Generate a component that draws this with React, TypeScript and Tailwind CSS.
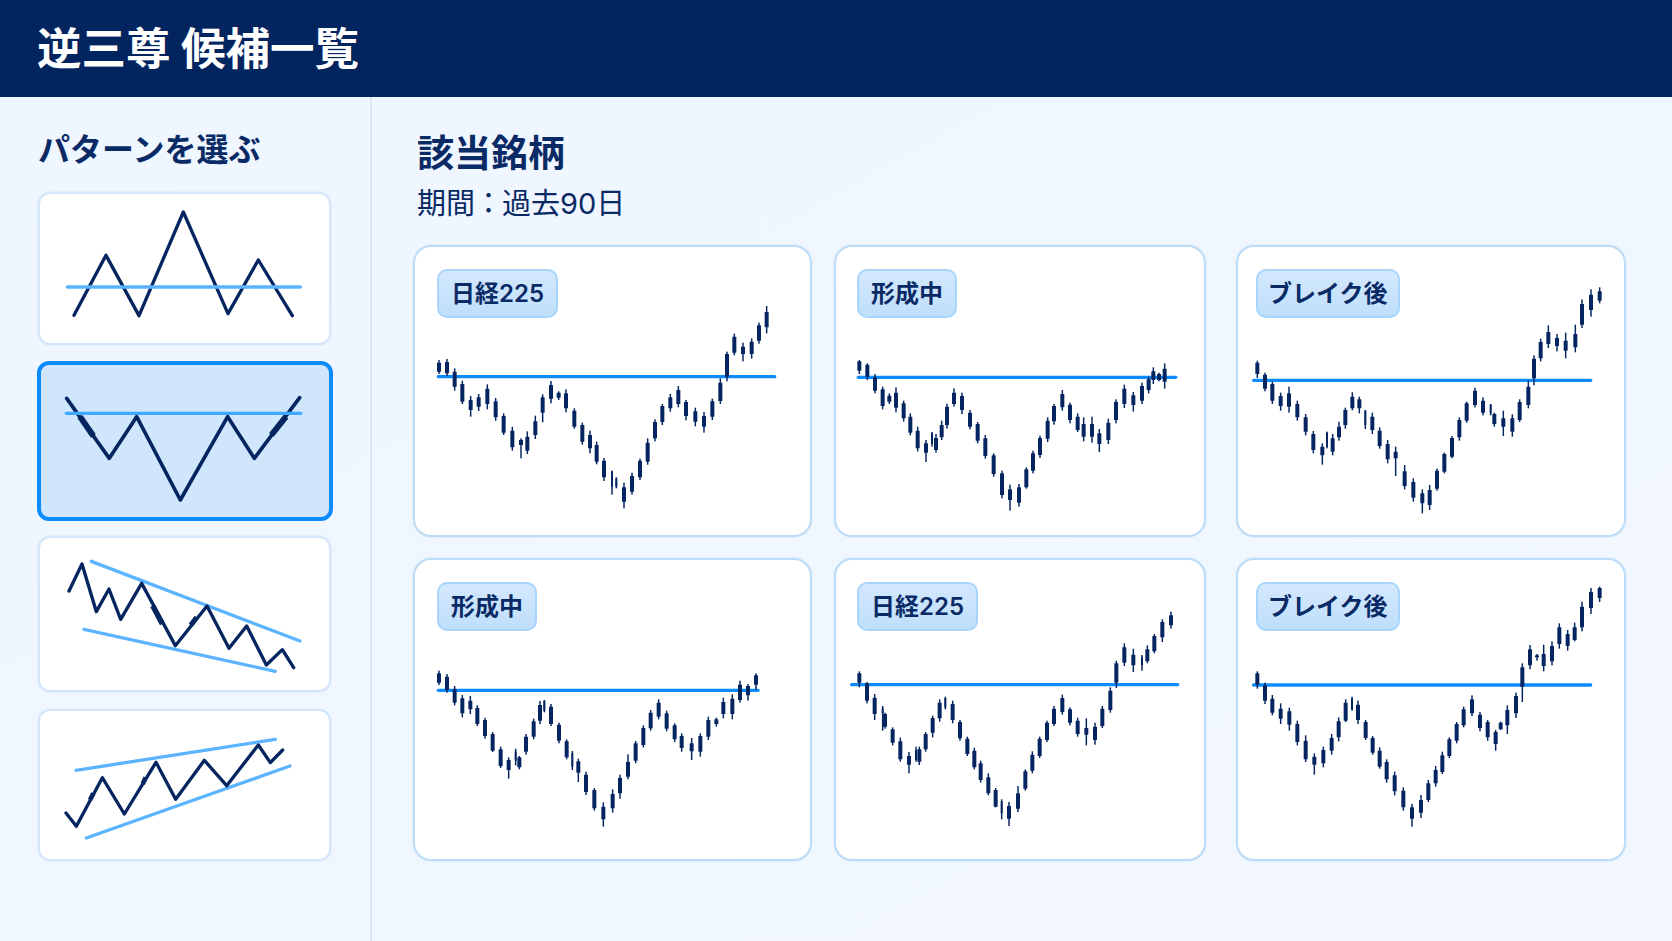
type Candle = number[];

const NAVY = "#052560";
const LINE = "#0a8cff";
const SOFT = "#5cb4ff";

const c1: Candle[] = [[117,390,398,425,432],[141,387,396,430,438],[164,415,425,470,482],[187,452,462,515,522],[212,498,510,540,560],[236,492,502,530,543],[262,463,476,522,538],[287,504,514,562,572],[311,550,558,608,615],[337,590,602,652,662],[363,625,630,645,685],[382,604,620,662,672],[406,557,574,615,627],[428,493,502,548,577],[453,453,465,506,520],[476,484,488,503,510],[498,478,490,535,547],[523,535,542,590,596],[547,578,585,635,644],[570,602,615,655,670],[590,635,645,695,703],[612,684,692,742,753],[636,722,724,770,794,1],[649,742,745,770,775,1],[672,758,772,815,835],[696,728,738,785,794],[720,686,692,742,750],[743,625,638,695,704],[765,568,576,625,634],[787,522,528,576,585],[811,492,502,535,545],[835,468,480,522,532],[858,510,516,558,571],[886,533,544,575,589],[912,546,558,590,608],[937,506,514,560,570],[961,445,458,513,522],[981,365,372,440,454],[1003,311,320,368,376],[1029,338,350,372,394],[1055,325,335,372,386],[1077,278,286,332,341],[1100,228,246,292,310]];
const c2: Candle[] = [[88,390,394,422,432],[112,400,404,440,450],[135,432,442,482,490],[158,470,478,528,538],[178,490,497,515,522],[198,472,488,533,547],[221,512,520,565,575],[241,550,560,608,616],[263,590,602,655,664],[288,630,640,668,696],[306,606,610,642,650,1],[318,612,624,660,668],[335,572,585,622,630],[351,521,530,585,596],[372,475,488,522,530],[396,488,498,540,552],[420,540,548,590,598],[443,576,582,632,640],[466,615,625,678,686],[491,670,676,732,740],[516,722,730,795,805],[540,764,778,810,842],[567,762,772,818,830],[589,712,718,772,776],[609,662,670,722,730],[630,617,624,675,684],[653,562,572,626,636],[672,522,528,574,584],[697,480,492,532,542],[720,518,524,570,580],[743,550,560,600,606],[761,562,582,620,634],[786,560,582,620,638],[808,597,610,642,666],[835,566,578,630,642],[858,508,516,570,580],[883,464,476,522,534],[910,486,496,525,545],[936,458,468,512,522],[956,440,448,480,490],[970,412,424,450,462],[987,428,432,450,454],[1004,400,416,455,476]];
const c3: Candle[] = [[82,392,398,432,444],[105,428,434,476,484],[127,455,462,512,522],[152,488,498,528,542],[177,470,490,530,548],[202,512,522,562,572],[227,552,562,605,616],[250,603,612,660,670],[277,640,650,676,704],[291,605,608,650,655,1],[308,612,625,665,676],[327,575,590,622,632],[346,533,540,585,596],[367,487,500,535,541],[388,500,508,535,550],[406,540,542,585,597,1],[427,548,560,600,612],[449,592,602,648,656],[473,630,642,688,700],[497,650,665,685,738],[524,705,724,768,778],[550,745,756,803,815],[577,778,790,820,850],[599,765,780,825,840],[621,716,722,776,782],[643,668,672,725,730],[666,618,624,680,685],[688,562,570,622,632],[710,515,520,572,578],[735,473,482,525,532],[759,502,512,548,556],[782,522,524,550,556,1],[793,548,552,582,590],[820,542,565,590,618],[847,553,565,605,620],[869,508,516,570,576],[895,452,470,525,535],[912,376,386,445,466],[932,326,336,385,394],[955,286,306,342,354],[981,312,324,348,364],[1007,308,332,362,385],[1036,284,312,352,367],[1056,208,222,284,294],[1083,178,194,240,260],[1109,172,184,212,220]];
const c4: Candle[] = [[117,362,370,398,405],[141,372,380,420,428],[164,408,418,458,466],[187,435,445,490,502],[211,438,452,478,492],[232,466,474,522,528],[255,503,510,558,566],[278,546,552,602,606],[302,590,598,648,654],[326,622,630,660,686],[347,596,604,632,646,1],[358,618,622,652,658],[378,552,560,605,614],[401,506,514,560,568],[420,453,465,512,522],[433,450,453,482,487,1],[453,462,470,522,528],[477,518,524,572,580],[500,568,574,622,628],[517,603,610,650,660,1],[535,626,634,668,696],[558,665,674,726,735],[583,714,720,775,782],[610,757,770,808,830],[638,718,732,775,788],[660,674,684,730,746],[684,613,636,680,688],[707,573,580,632,640],[730,526,534,585,592],[752,480,488,535,542],[776,448,458,500,508],[800,482,490,536,544],[824,520,526,568,576],[845,550,558,594,605],[875,564,580,604,630],[901,550,558,605,620],[925,500,510,560,570],[949,503,508,522,530],[970,443,456,492,505],[997,433,446,492,508],[1020,392,404,450,458],[1044,402,408,436,452],[1068,370,376,404,420]];
const c5: Candle[] = [[88,364,370,398,412],[111,396,400,452,460],[134,432,443,492,510],[158,468,475,490,542,1],[165,488,492,530,536],[188,532,538,578,586],[211,563,574,628,635],[237,606,618,644,670],[258,590,600,630,635,1],[268,590,598,635,645],[287,546,552,598,605],[308,497,504,548,562],[329,448,458,505,515],[346,440,444,472,478,1],[368,452,462,510,520],[390,510,516,565,572],[412,560,566,612,618],[433,593,602,652,658],[452,632,640,690,698],[475,670,682,730,736],[497,714,720,770,772],[515,748,754,790,808,1],[537,756,768,806,828],[564,708,730,776,786],[586,658,664,716,722],[607,604,614,662,670],[629,560,566,618,624],[651,512,518,570,576],[672,468,476,522,528],[697,434,444,486,494],[720,472,478,518,526],[743,503,512,552,560],[769,505,534,554,586],[795,518,530,570,584],[817,468,476,528,534],[841,412,422,480,488],[859,332,340,398,414],[883,280,292,338,348],[910,296,314,346,366],[936,315,322,345,362,1],[952,286,298,334,340],[973,252,258,304,310],[997,208,216,262,276],[1023,185,196,226,236]];
const c6: Candle[] = [[82,364,370,404,416],[105,398,406,452,462],[127,435,446,488,496],[152,460,476,506,522],[178,473,484,524,542],[202,512,522,576,586],[227,556,572,628,636],[253,610,620,644,674],[280,590,600,640,652],[305,552,564,602,614],[326,502,514,562,574],[347,448,458,512,516],[366,440,445,478,482,1],[384,452,464,510,522],[407,510,516,564,570],[428,558,564,608,614],[449,592,602,650,656],[470,628,636,688,698],[494,665,676,724,736],[520,712,722,772,782],[546,762,772,806,830],[573,735,750,788,804],[595,690,700,750,756],[617,648,660,700,710],[637,605,616,666,672],[658,562,568,618,624],[680,516,522,572,580],[701,470,478,526,532],[726,436,448,490,498],[750,486,494,534,544],[773,510,516,562,572],[797,540,546,582,602],[812,515,518,538,540],[832,466,480,526,552],[858,428,438,490,504],[877,340,352,410,456],[900,285,298,346,358],[921,312,316,322,332],[941,284,312,348,364],[966,274,288,334,346],[988,220,232,282,296],[1013,240,252,288,302],[1034,218,232,270,274],[1056,155,170,232,244],[1083,114,126,174,192],[1109,110,114,144,156]];

// chart coordinates are measured at 3x, vb = inner box of the svg in those units
function Chart({ vb, w, h, line, candles }: { vb: number[]; w: number; h: number; line: number[]; candles: Candle[] }) {
  return (
    <svg width={w} height={h} viewBox={vb.join(" ")} className="block overflow-visible">
      <line x1={line[0] + 3} x2={line[1] - 3} y1={line[2]} y2={line[2]} stroke={LINE} strokeWidth="10" strokeLinecap="round" />
      {candles.map((c) => (
        <g key={c[0]} fill={NAVY}>
          <rect x={c[0] - 2.2} y={c[1]} width="4.4" height={c[4] - c[1]} />
          <rect
            x={c[0] - (c[5] ? 3 : 6)}
            y={c[2]}
            width={c[5] ? 6 : 12}
            height={c[3] - c[2]}
            rx="1"
          />
        </g>
      ))}
    </svg>
  );
}

function Thumb({ vb, w, h, children }: { vb: number[]; w: number; h: number; children: React.ReactNode }) {
  return (
    <svg
      width={w}
      height={h}
      viewBox={vb.join(" ")}
      className="block"
      fill="none"
      strokeLinecap="round"
      strokeLinejoin="round"
    >
      {children}
    </svg>
  );
}

function Badge({ label, cls }: { label: string; cls: string }) {
  return (
    <div
      className={`flex h-[49px] items-center self-start rounded-[10px] border-2 border-[#a9d5fc] bg-gradient-to-b from-[#d3e8fd] to-[#bfdffb] pt-px text-[24px] font-semibold text-[#0a2a66] ${cls}`}
    >
      {label}
    </div>
  );
}

const pts1 = "222,946 318,766 417,947 550,636 684,941 775,780 877,947";
const pts2 = "200,175 328,355 410,230 541,480 683,230 763,355 899,173";
const pts3 = "207,753 246,672 289,815 327,747 362,838 425,730 526,917 621,798 687,925 740,858 799,975 847,929 881,983";
const pts4 = "198,369 229,409 307,263 373,372 468,217 527,328 613,211 680,287 775,165 811,218 848,180";

export default function App() {
  return (
    <div className="flex h-[941px] w-[1672px] flex-col overflow-hidden bg-gradient-to-br from-[#eef6ff] to-[#f2f7ff] font-['Inter','Noto_Sans_CJK_JP',sans-serif] text-[#0a2a66]">
      <header className="flex h-[97px] shrink-0 items-center bg-[#02245f] pt-px pl-[37px]">
        <h1 className="text-[44.5px] leading-none font-bold text-white">逆三尊 候補一覧</h1>
      </header>

      <div className="flex flex-1">
        <aside className="w-[372px] shrink-0 border-r-2 border-[#d6e7fa] pt-[37px] pl-[38px]">
          <h2 className="h-[32px] text-[32px] leading-[32px] font-bold whitespace-nowrap">パターンを選ぶ</h2>

          <div className="mt-[26px] h-[153px] w-[293px] overflow-hidden rounded-[12px] border-2 border-[#d5e6fa] bg-white shadow-[0_0_0_1px_#e4f0fc]">
            <Thumb vb={[120, 582, 867, 447]} w={289} h={149}>
              <polyline points={pts1} stroke={NAVY} strokeWidth="10" />
              <line x1="202" x2="901" y1="861" y2="861" stroke={SOFT} strokeWidth="10" />
            </Thumb>
          </div>

          <div className="mt-[16px] -ml-px h-[160px] w-[296px] overflow-hidden rounded-[12px] border-4 border-[#0a8cff] bg-[#cfe6fc]">
            <Thumb vb={[123, 75, 864, 456]} w={288} h={152}>
              <polyline points={pts2} stroke={NAVY} strokeWidth="11" />
              <line x1="240" y1="230" x2="280" y2="288" stroke={NAVY} strokeWidth="18" strokeLinecap="butt" />
              <line x1="814" y1="285" x2="858" y2="230" stroke={NAVY} strokeWidth="18" strokeLinecap="butt" />
              <line x1="199" x2="902" y1="220" y2="220" stroke="#3fa9ff" strokeWidth="10" />
            </Thumb>
          </div>

          <div className="mt-[15px] h-[156px] w-[293px] overflow-hidden rounded-[12px] border-2 border-[#d5e6fa] bg-white shadow-[0_0_0_1px_#e4f0fc]">
            <Thumb vb={[120, 594, 867, 456]} w={289} h={152}>
              <line x1="274" y1="664" x2="900" y2="903" stroke={SOFT} strokeWidth="10" />
              <line x1="252" y1="868" x2="826" y2="994" stroke={SOFT} strokeWidth="10" />
              <polyline points={pts3} stroke={NAVY} strokeWidth="10" />
              <line x1="458" y1="797" x2="487" y2="852" stroke={NAVY} strokeWidth="16" strokeLinecap="butt" />
              <line x1="572" y1="856" x2="590" y2="832" stroke={NAVY} strokeWidth="15" strokeLinecap="butt" />
            </Thumb>
          </div>

          <div className="mt-[17px] h-[152px] w-[293px] overflow-hidden rounded-[12px] border-2 border-[#d5e6fa] bg-white shadow-[0_0_0_1px_#e4f0fc]">
            <Thumb vb={[120, 63, 867, 444]} w={289} h={148}>
              <line x1="228" y1="241" x2="826" y2="148" stroke={SOFT} strokeWidth="10" />
              <line x1="259" y1="444" x2="870" y2="228" stroke={SOFT} strokeWidth="10" />
              <polyline points={pts4} stroke={NAVY} strokeWidth="10" />
              <line x1="270" y1="330" x2="280" y2="310" stroke={NAVY} strokeWidth="14" strokeLinecap="butt" />
              <line x1="428" y1="282" x2="437" y2="262" stroke={NAVY} strokeWidth="14" strokeLinecap="butt" />
            </Thumb>
          </div>
        </aside>

        <main className="flex-1 pl-[41px]">
          <h2 className="mt-[35px] ml-1 h-[44px] text-[37px] leading-[44px] font-bold">該当銘柄</h2>
          <p className="mt-[10px] ml-1 h-[36px] text-[29px] leading-[36px]">
            期間<span className="-mx-px">：</span>過去90日
          </p>

          <div className="mt-[23px] grid grid-cols-[399px_372px_398px] grid-rows-[292px_303px] gap-x-[22px] gap-y-[21px]">
            <div className="flex flex-col rounded-[18px] border-2 border-[#bddcf8] bg-white shadow-[0_0_0_1px_#e4f0fc]">
              <Badge label="日経225" cls="mt-[22px] ml-[22px] px-[12px]" />
              <Chart vb={[45, 264, 1185, 651]} w={395} h={217} line={[112, 1127, 440]} candles={c1} />
            </div>
            <div className="flex flex-col rounded-[18px] border-2 border-[#bddcf8] bg-white shadow-[0_0_0_1px_#e4f0fc]">
              <Badge label="形成中" cls="mt-[22px] ml-[21px] px-[12px]" />
              <Chart vb={[18, 264, 1104, 651]} w={368} h={217} line={[82, 1040, 442]} candles={c2} />
            </div>
            <div className="ml-2 flex flex-col rounded-[18px] border-2 border-[#bddcf8] bg-white shadow-[0_0_0_1px_#e4f0fc]">
              <Badge label="ブレイク後" cls="mt-[22px] ml-[18px] px-[10px]" />
              <Chart vb={[24, 264, 1158, 651]} w={386} h={217} line={[68, 1085, 451]} candles={c3} />
            </div>

            <div className="flex flex-col rounded-[18px] border-2 border-[#bddcf8] bg-white shadow-[0_0_0_1px_#e4f0fc]">
              <Badge label="形成中" cls="mt-[22px] ml-[22px] px-[12px]" />
              <Chart vb={[45, 243, 1185, 684]} w={395} h={228} line={[112, 1077, 421]} candles={c4} />
            </div>
            <div className="flex flex-col rounded-[18px] border-2 border-[#bddcf8] bg-white shadow-[0_0_0_1px_#e4f0fc]">
              <Badge label="日経225" cls="mt-[22px] ml-[21px] px-[12px]" />
              <Chart vb={[18, 243, 1104, 684]} w={368} h={228} line={[62, 1046, 404]} candles={c5} />
            </div>
            <div className="ml-2 flex flex-col rounded-[18px] border-2 border-[#bddcf8] bg-white shadow-[0_0_0_1px_#e4f0fc]">
              <Badge label="ブレイク後" cls="mt-[22px] ml-[18px] px-[10px]" />
              <Chart vb={[24, 243, 1158, 684]} w={386} h={228} line={[68, 1085, 405]} candles={c6} />
            </div>
          </div>
        </main>
      </div>
    </div>
  );
}
